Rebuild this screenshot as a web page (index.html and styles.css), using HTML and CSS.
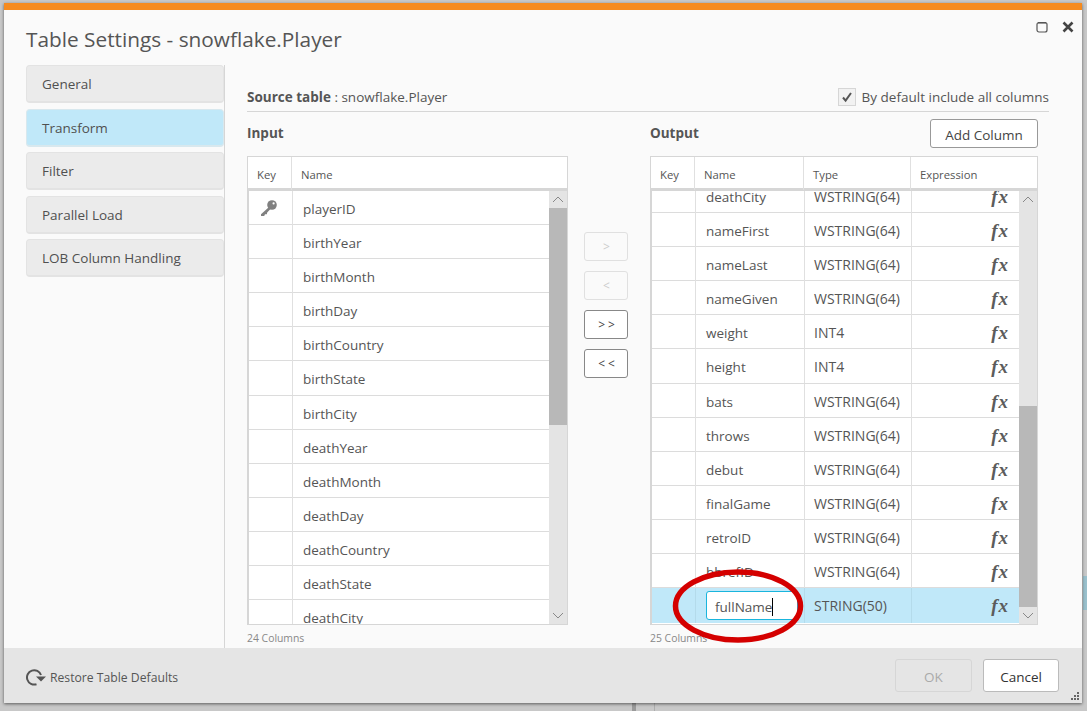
FILE: index.html
```html
<!DOCTYPE html>
<html lang="en">
<head>
<meta charset="UTF-8">
<meta name="viewport" content="width=device-width, initial-scale=1.0">
<title>Table Settings</title>
<link rel="stylesheet" href="styles.css">
</head>
<body>

<div class="dialog">
  <div class="dialog-top">
    <h1>Table Settings - snowflake.Player</h1>
    <div class="window-icons">
      <svg width="12" height="12" viewBox="0 0 12 12"><rect x="1" y="1.5" width="10" height="9.5" rx="2" fill="none" stroke="#555" stroke-width="1.2"/><path d="M2 1.8H10" stroke="#555" stroke-width="1.6"/></svg>
      <svg width="12" height="12" viewBox="0 0 12 12"><path d="M1.5 1.5L10.5 10.5M10.5 1.5L1.5 10.5" stroke="#444" stroke-width="2.6"/></svg>
    </div>
  </div>

  <div class="dialog-body">
    <div class="side-nav">
      <div class="nav-item">General</div>
      <div class="nav-item active">Transform</div>
      <div class="nav-item">Filter</div>
      <div class="nav-item">Parallel Load</div>
      <div class="nav-item">LOB Column Handling</div>
    </div>

    <div class="content">
      <div class="source-row">
        <div><b>Source table</b> : snowflake.Player</div>
        <label class="include-all">
          <span class="checkbox"><svg width="12" height="12" viewBox="0 0 12 12"><path d="M2 6.5L4.6 9.6L10 2" fill="none" stroke="#555" stroke-width="2"/></svg></span>
          By default include all columns
        </label>
      </div>

      <div class="columns">
        <div class="input-col">
          <div class="col-head"><b>Input</b></div>
          <div class="grid">
            <div class="grid-head input-cols">
              <div>Key</div><div>Name</div>
            </div>
            <div class="grid-main">
              <div class="rows">
                <div class="row input-cols"><div class="key-cell"><svg width="18" height="18" viewBox="0 0 18 18"><circle cx="12" cy="6" r="4.8" fill="#808080"/><path d="M9 8L1 15.2V17H4.2L5 15.2H6.8L7.2 13.6L11 9.6Z" fill="#808080"/><circle cx="13.6" cy="4.4" r="1.1" fill="#fff"/></svg></div><div class="name-cell">playerID</div></div>
                <div class="row input-cols"><div></div><div class="name-cell">birthYear</div></div>
                <div class="row input-cols"><div></div><div class="name-cell">birthMonth</div></div>
                <div class="row input-cols"><div></div><div class="name-cell">birthDay</div></div>
                <div class="row input-cols"><div></div><div class="name-cell">birthCountry</div></div>
                <div class="row input-cols"><div></div><div class="name-cell">birthState</div></div>
                <div class="row input-cols"><div></div><div class="name-cell">birthCity</div></div>
                <div class="row input-cols"><div></div><div class="name-cell">deathYear</div></div>
                <div class="row input-cols"><div></div><div class="name-cell">deathMonth</div></div>
                <div class="row input-cols"><div></div><div class="name-cell">deathDay</div></div>
                <div class="row input-cols"><div></div><div class="name-cell">deathCountry</div></div>
                <div class="row input-cols"><div></div><div class="name-cell">deathState</div></div>
                <div class="row input-cols"><div></div><div class="name-cell">deathCity</div></div>
              </div>
              <div class="scrollbar">
                <div class="arrow"><svg width="12" height="7" viewBox="0 0 12 7"><path d="M1 6L6 1L11 6" fill="none" stroke="#888"/></svg></div>
                <div class="track"><div class="thumb input-thumb"></div></div>
                <div class="arrow"><svg width="12" height="7" viewBox="0 0 12 7"><path d="M1 1L6 6L11 1" fill="none" stroke="#888"/></svg></div>
              </div>
            </div>
          </div>
          <div class="count">24 Columns</div>
        </div>

        <div class="move-buttons">
          <button class="move" disabled>&gt;</button>
          <button class="move" disabled>&lt;</button>
          <button class="move">&gt;&gt;</button>
          <button class="move">&lt;&lt;</button>
        </div>

        <div class="output-col">
          <div class="col-head"><b>Output</b><button class="btn add-btn">Add Column</button></div>
          <div class="grid">
            <div class="grid-head output-cols">
              <div>Key</div><div>Name</div><div>Type</div><div>Expression</div>
            </div>
            <div class="grid-main">
              <div class="rows output-rows">
                <div class="row output-cols"><div></div><div class="name-cell">deathCity</div><div class="type-cell">WSTRING(64)</div><div class="fx-cell">fx</div></div>
                <div class="row output-cols"><div></div><div class="name-cell">nameFirst</div><div class="type-cell">WSTRING(64)</div><div class="fx-cell">fx</div></div>
                <div class="row output-cols"><div></div><div class="name-cell">nameLast</div><div class="type-cell">WSTRING(64)</div><div class="fx-cell">fx</div></div>
                <div class="row output-cols"><div></div><div class="name-cell">nameGiven</div><div class="type-cell">WSTRING(64)</div><div class="fx-cell">fx</div></div>
                <div class="row output-cols"><div></div><div class="name-cell">weight</div><div class="type-cell">INT4</div><div class="fx-cell">fx</div></div>
                <div class="row output-cols"><div></div><div class="name-cell">height</div><div class="type-cell">INT4</div><div class="fx-cell">fx</div></div>
                <div class="row output-cols"><div></div><div class="name-cell">bats</div><div class="type-cell">WSTRING(64)</div><div class="fx-cell">fx</div></div>
                <div class="row output-cols"><div></div><div class="name-cell">throws</div><div class="type-cell">WSTRING(64)</div><div class="fx-cell">fx</div></div>
                <div class="row output-cols"><div></div><div class="name-cell">debut</div><div class="type-cell">WSTRING(64)</div><div class="fx-cell">fx</div></div>
                <div class="row output-cols"><div></div><div class="name-cell">finalGame</div><div class="type-cell">WSTRING(64)</div><div class="fx-cell">fx</div></div>
                <div class="row output-cols"><div></div><div class="name-cell">retroID</div><div class="type-cell">WSTRING(64)</div><div class="fx-cell">fx</div></div>
                <div class="row output-cols"><div></div><div class="name-cell">bbrefID</div><div class="type-cell">WSTRING(64)</div><div class="fx-cell">fx</div></div>
                <div class="row output-cols selected"><div></div><div class="edit-cell"><div class="name-input">fullName<span class="caret"></span></div></div><div class="type-cell">STRING(50)</div><div class="fx-cell">fx</div></div>
              </div>
              <div class="scrollbar">
                <div class="arrow"><svg width="12" height="7" viewBox="0 0 12 7"><path d="M1 6L6 1L11 6" fill="none" stroke="#888"/></svg></div>
                <div class="track"><div class="thumb output-thumb"></div></div>
                <div class="arrow"><svg width="12" height="7" viewBox="0 0 12 7"><path d="M1 1L6 6L11 1" fill="none" stroke="#888"/></svg></div>
              </div>
            </div>
          </div>
          <div class="count">25 Columns</div>
        </div>
      </div>
    </div>
  </div>

  <div class="dialog-footer">
    <div class="restore">
      <svg width="20" height="18" viewBox="0 0 20 18"><path d="M15 7A7.2 7.2 0 1 0 10.5 16.2" fill="none" stroke="#555" stroke-width="2"/><path d="M10 8.5H20L15 13.5Z" fill="#555"/></svg>
      Restore Table Defaults
    </div>
    <div class="footer-buttons">
      <button class="btn ok-btn" disabled>OK</button>
      <button class="btn cancel-btn">Cancel</button>
    </div>
    <svg class="grip" width="10" height="10" viewBox="0 0 10 10"><path d="M8 1h2v2H8zM5 4h2v2H5zM8 4h2v2H8zM2 7h2v2H2zM5 7h2v2H5zM8 7h2v2H8z" fill="#666"/></svg>
  </div>

  <svg class="annotation" width="134" height="76" viewBox="0 0 134 76"><ellipse cx="67" cy="38" rx="62.5" ry="34" fill="none" stroke="#d40000" stroke-width="5.5"/></svg>
</div>

</body>
</html>
```

FILE: styles.css
```css
html, body {
  height: 100%;
}
body {
  margin: 0;
  padding: 3px 5px 8px 4px;
  box-sizing: border-box;
  background-color: #c8c8c8;
  background-image:
    linear-gradient(#9ac0cc, #9ac0cc),
    linear-gradient(#9a9a9a, #9a9a9a),
    linear-gradient(#adadad, #adadad);
  background-repeat: no-repeat;
  background-size: 4px 34px, 4px 8px, 1px 8px;
  background-position: 1083px 576px, 632px 703px, 654px 703px;
  font-family: "Open Sans", Arial, sans-serif;
  font-size: 13.5px;
  color: #555;
  overflow: hidden;
}
.dialog {
  position: relative;
  height: 700px;
  box-sizing: border-box;
  display: flex;
  flex-direction: column;
  background-color: #fafafa;
  border-top: 7px solid #f68b1f;
  box-shadow: 0 1px 3px rgba(0, 0, 0, 0.55);
}
.dialog-top {
  height: 55px;
  flex: none;
  display: flex;
  justify-content: space-between;
  padding: 0 8px 0 22px;
}
.dialog-top h1 {
  margin: 14px 0 0;
  font-size: 20.8px;
  line-height: 30px;
  font-weight: 400;
  color: #555;
}
.window-icons {
  display: flex;
  gap: 14px;
  padding-top: 11px;
}
.dialog-body {
  flex: 1;
  display: flex;
  min-height: 0;
}
.side-nav {
  width: 198px;
  flex: none;
  margin-left: 22px;
  display: flex;
  flex-direction: column;
  gap: 5.5px;
}
.nav-item {
  height: 38px;
  flex: none;
  line-height: 36px;
  padding-left: 15px;
  background-color: #ebebeb;
  border: 1px solid #e3e3e3;
  border-bottom-width: 2px;
  border-radius: 4px;
  box-sizing: border-box;
  color: #505050;
}
.nav-item.active {
  background-color: #c0e8f9;
  border-color: #d8e8ee;
}
.content {
  flex: 1;
  padding: 0 33px 0 22px;
  border-left: 1px solid #d6d6d6;
  min-width: 0;
}
.source-row {
  height: 47px;
  display: flex;
  justify-content: space-between;
  align-items: flex-end;
  padding-bottom: 5px;
  box-sizing: border-box;
  border-bottom: 1px solid #d6d6d6;
  line-height: 18px;
}
.source-row b {
  font-weight: 700;
}
.include-all {
  display: flex;
  align-items: center;
  gap: 6px;
}
.checkbox {
  width: 18px;
  height: 18px;
  box-sizing: border-box;
  display: flex;
  align-items: center;
  justify-content: center;
  background-color: #f2f2f2;
  border: 1px solid #d6d6d6;
}
.columns {
  display: flex;
}
.input-col {
  width: 321px;
  flex: none;
}
.output-col {
  width: 388px;
  flex: none;
}
.col-head {
  height: 44px;
  display: flex;
  justify-content: space-between;
  align-items: flex-start;
  box-sizing: border-box;
  padding-top: 12px;
}
.col-head b {
  line-height: 18px;
}
.add-btn {
  margin-top: -5px;
}
.btn {
  width: 108px;
  height: 29px;
  padding: 2px 0 0;
  font-family: inherit;
  font-size: 13.5px;
  color: #444;
  background-color: #fff;
  border: 1px solid #999;
  border-radius: 3px;
}
.grid {
  border: 1px solid #d6d6d6;
  background-color: #fff;
  height: 469px;
  display: flex;
  flex-direction: column;
  box-sizing: border-box;
}
.grid-head {
  height: 34px;
  flex: none;
  border-bottom: 3px solid #d6d6d6;
  box-sizing: border-box;
  font-size: 11.3px;
}
.grid-head > div {
  padding: 2px 0 0 9px;
  line-height: 31px;
  border-left: 1px solid #e0e0e0;
}
.grid-head > div:first-child {
  border-left: none;
}
.input-cols {
  display: grid;
  grid-template-columns: 43px 1fr;
}
.output-cols {
  display: grid;
  grid-template-columns: 43px 109px 107px 1fr;
}
.grid-main {
  flex: 1;
  display: flex;
  min-height: 0;
  border-left: 1px solid #d6d6d6;
}
.rows {
  flex: 1;
  min-width: 0;
  overflow: hidden;
}
.row {
  height: 34.1px;
  box-sizing: border-box;
  border-bottom: 1px solid #dcdcdc;
  line-height: 32px;
}
.output-rows .row:first-child {
  margin-top: -12px;
}
.row > div {
  border-left: 1px solid #e0e0e0;
  box-sizing: border-box;
  padding-top: 2px;
}
.row > div:first-child {
  border-left: none;
}
.name-cell {
  padding-left: 10px;
  white-space: nowrap;
}
.type-cell {
  padding-left: 9px;
  font-size: 14px;
}
.row > .key-cell {
  display: flex;
  align-items: center;
  padding: 0 0 0 11px;
}
.fx-cell {
  text-align: right;
  padding-right: 10px;
  font-family: "Liberation Serif", serif;
  font-size: 19px;
  font-style: italic;
  font-weight: 700;
  letter-spacing: 1px;
  color: #5c5c5c;
}
.selected {
  background-color: #c0e8f9;
  height: 35px;
  border-bottom: none;
}
.selected > div {
  border-left-color: #b4dbeb;
}
.row > .edit-cell {
  padding: 3px 6px 2px 10px;
}
.name-input {
  height: 29px;
  line-height: 30px;
  padding-left: 8px;
  background-color: #fff;
  border: 1px solid #19b5dd;
  border-radius: 3px;
  box-sizing: border-box;
}
.caret {
  display: inline-block;
  width: 1px;
  height: 18px;
  vertical-align: -4px;
  background-color: #000;
}
.scrollbar {
  width: 18px;
  flex: none;
  display: flex;
  flex-direction: column;
  background-color: #e4e4e4;
}
.arrow {
  height: 17px;
  flex: none;
  display: flex;
  align-items: center;
  justify-content: center;
}
.track {
  flex: 1;
  display: flex;
  flex-direction: column;
}
.thumb {
  background-color: #b8b8b8;
}
.input-thumb {
  height: 217px;
}
.output-thumb {
  height: 201px;
  margin-top: auto;
}
.count {
  margin-top: 6px;
  font-size: 10.4px;
  line-height: 15px;
  color: #888;
}
.move-buttons {
  width: 82px;
  flex: none;
  display: flex;
  flex-direction: column;
  align-items: flex-start;
  gap: 10px;
  padding: 120px 0 0 16px;
  box-sizing: border-box;
}
.move {
  width: 44px;
  height: 29px;
  padding: 0 0 0 4px;
  font-family: inherit;
  font-size: 12px;
  letter-spacing: 3px;
  color: #444;
  background-color: #fff;
  border: 1px solid #888;
  border-radius: 3px;
}
.move:disabled {
  color: #ccc;
  background-color: #fafafa;
  border-color: #e0e0e0;
}
.dialog-footer {
  position: relative;
  height: 55px;
  flex: none;
  display: flex;
  justify-content: space-between;
  align-items: center;
  padding: 0 23px 0 22px;
  background-color: #e5e5e5;
}
.restore {
  display: flex;
  align-items: center;
  gap: 4px;
  font-size: 12.2px;
  padding-top: 3px;
}
.footer-buttons {
  display: flex;
  gap: 11px;
}
.ok-btn {
  width: 77px;
  height: 33px;
  color: #aaa;
  background-color: #e5e5e5;
  border-color: #d6d6d6;
}
.cancel-btn {
  width: 76px;
  height: 33px;
  color: #333;
  border-color: #bbb;
}
.grip {
  position: absolute;
  right: 3px;
  bottom: 2px;
}
.annotation {
  position: absolute;
  left: 667px;
  top: 558px;
}
```
